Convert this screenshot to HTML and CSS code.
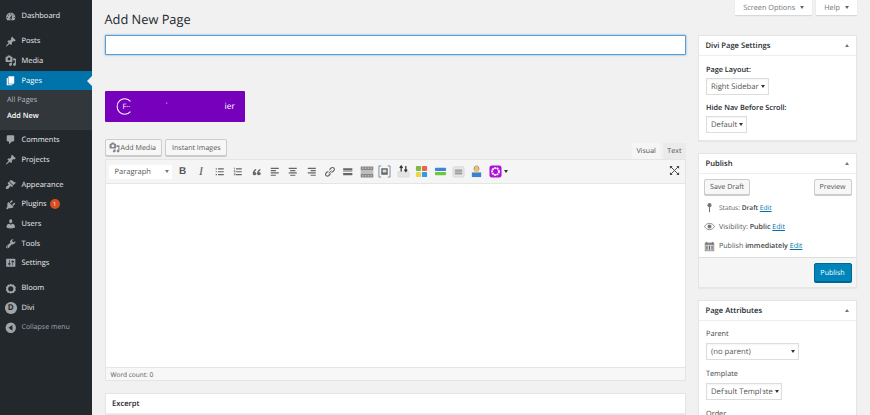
FILE: index.html
```html
<!DOCTYPE html>
<html lang="en">
<head>
<meta charset="utf-8">
<title>Add New Page</title>
<link rel="stylesheet" href="styles.css">
</head>
<body>
<svg class="defs" aria-hidden="true">
<symbol id="i-dash" viewBox="0 0 20 20"><path d="M3.76 16h12.48c1.1-1.37 1.76-3.11 1.76-5 0-4.42-3.58-8-8-8s-8 3.58-8 8c0 1.89.66 3.63 1.76 5zM10 4c.55 0 1 .45 1 1s-.45 1-1 1-1-.45-1-1 .45-1 1-1zM6 6c.55 0 1 .45 1 1s-.45 1-1 1-1-.45-1-1 .45-1 1-1zm8 0c.55 0 1 .45 1 1s-.45 1-1 1-1-.45-1-1 .45-1 1-1zm-5.37 5.55L12 7v6c0 1.1-.9 2-2 2s-2-.9-2-2c0-.57.24-1.08.63-1.45zM4 10c.55 0 1 .45 1 1s-.45 1-1 1-1-.45-1-1 .45-1 1-1zm12 0c.55 0 1 .45 1 1s-.45 1-1 1-1-.45-1-1 .45-1 1-1zm-5 3c0-.55-.45-1-1-1s-1 .45-1 1 .45 1 1 1 1-.45 1-1z"/></symbol>
<symbol id="i-pin" viewBox="0 0 20 20"><path d="M10.44 3.02l1.82-1.82 6.36 6.35-1.83 1.82c-1.05-.68-2.48-.57-3.41.36l-.75.75c-.92.93-1.04 2.35-.35 3.41l-1.83 1.82-2.41-2.41-2.8 2.79c-.42.42-3.38 2.71-3.8 2.29s1.86-3.39 2.28-3.81l2.79-2.79L4.1 9.36l1.83-1.82c1.05.69 2.48.57 3.4-.36l.75-.75c.93-.92 1.05-2.35.36-3.41z"/></symbol>
<symbol id="i-media" viewBox="0 0 20 20"><path d="M13 11V4c0-.55-.45-1-1-1h-1.67L9 1H5L3.67 3H2c-.55 0-1 .45-1 1v7c0 .55.45 1 1 1h10c.55 0 1-.45 1-1zM7 4.5c1.38 0 2.5 1.12 2.5 2.5S8.38 9.5 7 9.5 4.5 8.38 4.5 7 5.62 4.5 7 4.5zM14 6h5v10.5c0 1.38-1.12 2.5-2.5 2.5S14 17.88 14 16.5s1.12-2.5 2.5-2.5c.17 0 .34.02.5.05V9h-3V6zm-4 8.05V13h2v3.5c0 1.38-1.12 2.5-2.5 2.5S7 17.88 7 16.5 8.12 14 9.5 14c.17 0 .34.02.5.05z"/></symbol>
<symbol id="i-pages" viewBox="0 0 20 20"><path d="M6 15V2h10v13H6zm-1 1h8v2H3V5h2v11z"/></symbol>
<symbol id="i-comment" viewBox="0 0 20 20"><path d="M5 2h9c1.1 0 2 .9 2 2v7c0 1.1-.9 2-2 2h-2l-5 5v-5H5c-1.1 0-2-.9-2-2V4c0-1.1.9-2 2-2z"/></symbol>
<symbol id="i-brush" viewBox="0 0 20 20"><path d="M14.48 11.06L7.41 3.99l1.5-1.5c.5-.56 2.3-.47 3.51.32 1.21.8 1.43 1.28 2.91 2.1 1.18.64 2.45 1.26 4.45.85zm-.71.71L6.7 4.7 4.93 6.47c-.39.39-.39 1.02 0 1.41l1.06 1.06c.39.39.39 1.03 0 1.42-.6.6-1.43 1.11-2.21 1.69-.35.26-.7.53-1.01.84C1.43 13.23.78 15.7 1.9 16.8c1.11 1.11 3.58.46 4.92-.88.31-.31.58-.66.84-1.01.58-.78 1.09-1.61 1.69-2.21.39-.39 1.02-.39 1.41 0l1.06 1.06c.39.39 1.02.39 1.41 0z"/></symbol>
<symbol id="i-plug" viewBox="0 0 20 20"><path d="M13.11 4.36L9.87 7.6 8 5.73l3.24-3.24c.35-.34 1.05-.2 1.56.32.52.51.66 1.21.31 1.55zm-8 1.77l.91-1.12 9.01 9.01-1.19.84c-.71.71-2.63 1.16-3.82 1.16H6.14L4.9 17.26c-.59.59-1.54.59-2.12 0-.59-.58-.59-1.53 0-2.12l1.24-1.24v-3.88c0-1.13.4-3.19 1.09-3.89zm7.26 3.97l3.24-3.24c.34-.35 1.04-.21 1.55.31.52.51.66 1.21.31 1.55l-3.24 3.25z"/></symbol>
<symbol id="i-users" viewBox="0 0 20 20"><path d="M10 9.25c-2.27 0-2.73-3.44-2.73-3.44C7 4.02 7.82 2 9.97 2c2.16 0 2.98 2.02 2.71 3.81 0 0-.41 3.44-2.68 3.44zm0 2.57L12.72 10c2.39 0 4.52 2.33 4.52 4.53v2.49s-3.65 1.13-7.24 1.13c-3.65 0-7.24-1.13-7.24-1.13v-2.49c0-2.25 1.94-4.48 4.47-4.48z"/></symbol>
<symbol id="i-tools" viewBox="0 0 20 20"><path d="M16.68 9.77c-1.34 1.34-3.3 1.67-4.95.99l-5.41 6.52c-.99.99-2.59.99-3.58 0s-.99-2.59 0-3.57l6.52-5.42c-.68-1.65-.35-3.61.99-4.95 1.28-1.28 3.12-1.62 4.72-1.06l-2.89 2.89 2.82 2.82 2.86-2.87c.53 1.58.18 3.39-1.08 4.65zM3.81 16.21c.4.39 1.04.39 1.43 0 .4-.4.4-1.04 0-1.43-.39-.4-1.03-.4-1.43 0-.39.39-.39 1.03 0 1.43z"/></symbol>
<symbol id="i-settings" viewBox="0 0 20 20"><path d="M18 16V4c0-.55-.45-1-1-1H3c-.55 0-1 .45-1 1v12c0 .55.45 1 1 1h14c.55 0 1-.45 1-1zM8 11h1c.55 0 1 .45 1 1s-.45 1-1 1H8v1.5c0 .28-.22.5-.5.5s-.5-.22-.5-.5V13H6c-.55 0-1-.45-1-1s.45-1 1-1h1V5.5c0-.28.22-.5.5-.5s.5.22.5.5V11zm5-2h-1c-.55 0-1-.45-1-1s.45-1 1-1h1V5.5c0-.28.22-.5.5-.5s.5.22.5.5V7h1c.55 0 1 .45 1 1s-.45 1-1 1h-1v5.5c0 .28-.22.5-.5.5s-.5-.22-.5-.5V9z"/></symbol>
<symbol id="i-bloom" viewBox="0 0 20 20"><path fill-rule="evenodd" d="M10 1.5l2.4 1.6 2.9-.3 1.2 2.6 2.4 1.7-.8 2.9.8 2.9-2.4 1.7-1.2 2.6-2.9-.3-2.4 1.6-2.4-1.6-2.9.3-1.2-2.6L1.500 13l.8-2.9-.8-2.900L3.900 5.400l1.200-2.600 2.900.3zM10 5.500a4.500 4.500 0 1 0 0 9 4.500 4.500 0 0 0 0-9z"/></symbol>
<symbol id="i-collapse" viewBox="0 0 20 20"><path fill-rule="evenodd" d="M10 1a9 9 0 1 1 0 18 9 9 0 0 1 0-18zm3 4L6 10l7 5z"/></symbol>
<symbol id="i-ul" viewBox="0 0 20 20"><path d="M3 4h2v2H3zM7 4h10v2H7zM3 9h2v2H3zM7 9h10v2H7zM3 14h2v2H3zM7 14h10v2H7z"/></symbol>
<symbol id="i-ol" viewBox="0 0 20 20"><path d="M3 3h2v3H4V4H3zM3 8h3v1l-2 1h2v1H3v-1l2-1H3zM3 13h3v3H3v-1h2v-.3H4V14h1v-.3H3zM7 4h10v2H7zM7 9h10v2H7zM7 14h10v2H7z"/></symbol>
<symbol id="i-quote" viewBox="0 0 20 20"><path d="M9.490 13.220c0-1.300-.99-2.300-2.300-2.300-.4 0-.8.1-1.100.3.4-1.800 1.800-3.400 3.400-4.400L8.100 5.200C5 6.900 3 9.800 3 12.900c0 1.900 1.300 3.200 3.200 3.200 1.800 0 3.290-1.200 3.290-2.880zm7.510 0c0-1.300-1-2.300-2.300-2.300-.4 0-.8.1-1.100.3.400-1.800 1.800-3.400 3.400-4.400l-1.400-1.620c-3.100 1.700-5.100 4.600-5.100 7.700 0 1.900 1.300 3.200 3.200 3.200 1.800 0 3.300-1.200 3.300-2.880z"/></symbol>
<symbol id="i-al" viewBox="0 0 20 20"><path d="M3 3h14v2H3zM3 7h9v2H3zM3 11h14v2H3zM3 15h9v2H3z"/></symbol>
<symbol id="i-ac" viewBox="0 0 20 20"><path d="M3 3h14v2H3zM5.500 7h9v2h-9zM3 11h14v2H3zM5.500 15h9v2h-9z"/></symbol>
<symbol id="i-ar" viewBox="0 0 20 20"><path d="M3 3h14v2H3zM8 7h9v2H8zM3 11h14v2H3zM8 15h9v2H8z"/></symbol>
<symbol id="i-link" viewBox="0 0 20 20"><path d="M17.740 2.760c1.680 1.690 1.680 4.410 0 6.100l-1.530 1.520c-1.120 1.120-2.700 1.490-4.130 1.130l2.790-2.790.76-.76.76-.76c.84-.84.84-2.200 0-3.040-.84-.85-2.200-.85-3.040 0l-.77.760-3.550 3.550c-.36-1.430.01-3.010 1.130-4.130l1.520-1.530c1.690-1.680 4.410-1.680 6.100 0zM8.590 13.430l5.100-5.100-1.010-1.020-5.100 5.100zM8.100 15.230l-.76.76c-.84.85-2.200.85-3.040 0-.84-.84-.84-2.200 0-3.040l3.550-3.550.76-.76c-1.430-.36-3.010.01-4.130 1.130l-1.520 1.530c-1.680 1.690-1.680 4.410 0 6.100 1.690 1.680 4.410 1.680 6.100 0l1.520-1.530c1.130-1.120 1.490-2.700 1.130-4.130z"/></symbol>
<symbol id="i-more" viewBox="0 0 20 20"><path d="M2 4h16v4H2zM2 9.400h16v1.200H2zM2 12h16v4H2z"/></symbol>
<symbol id="i-grid" viewBox="0 0 20 20"><path d="M1 2h18v6H1zM1 9.400h18v1.200H1zM1 12h18v6H1z"/><path class="cut" d="M3 4h2v1H3zM7 4h2v1H7zM11 4h2v1h-2zM15 4h2v1h-2zM3 15h2v1H3zM7 15h2v1H7zM11 15h2v1h-2zM15 15h2v1h-2z"/></symbol>
</svg>

<nav class="side">
  <ul class="menu">
    <li class="item"><svg class="ico"><use href="#i-dash"/></svg>Dashboard</li>
    <li class="item gap"><svg class="ico"><use href="#i-pin"/></svg>Posts</li>
    <li class="item"><svg class="ico"><use href="#i-media"/></svg>Media</li>
    <li class="item on"><svg class="ico"><use href="#i-pages"/></svg>Pages</li>
    <li class="sub"><span class="sub-a">All Pages</span><span class="sub-b">Add New</span></li>
    <li class="item"><svg class="ico"><use href="#i-comment"/></svg>Comments</li>
    <li class="item"><svg class="ico"><use href="#i-pin"/></svg>Projects</li>
    <li class="item gap"><svg class="ico"><use href="#i-brush"/></svg>Appearance</li>
    <li class="item"><svg class="ico"><use href="#i-plug"/></svg>Plugins<span class="badge">1</span></li>
    <li class="item"><svg class="ico"><use href="#i-users"/></svg>Users</li>
    <li class="item"><svg class="ico"><use href="#i-tools"/></svg>Tools</li>
    <li class="item"><svg class="ico"><use href="#i-settings"/></svg>Settings</li>
    <li class="item gap"><svg class="ico"><use href="#i-bloom"/></svg>Bloom</li>
    <li class="item"><span class="divi">D</span>Divi</li>
    <li class="item dim"><svg class="ico"><use href="#i-collapse"/></svg>Collapse menu</li>
  </ul>
</nav>

<main class="wrap">
  <section class="left">
    <h1 class="title">Add New Page</h1>
    <input class="name" type="text" aria-label="Title">
    <div class="promo">
      <svg class="promo-ring" viewBox="0 0 20 20"><path d="M17 4A9 9 0 1 0 17 16" fill="none" stroke="#fff" stroke-width="1.200"/></svg>
      <span class="promo-a">F··</span><span class="promo-c">·</span><span class="promo-b">ier</span>
    </div>
    <div class="media-row">
      <span class="btn"><svg class="btn-ico"><use href="#i-media"/></svg>Add Media</span>
      <span class="btn">Instant Images</span>
      <span class="tabs"><span class="tab act">Visual</span><span class="tab">Text</span></span>
    </div>
    <div class="editor">
      <div class="bar">
        <span class="para">Paragraph<i class="caret"></i></span>
        <span class="tools">
          <b class="t t-b">B</b>
          <i class="t t-i">I</i>
          <span class="t"><svg class="ti"><use href="#i-ul"/></svg></span>
          <span class="t"><svg class="ti"><use href="#i-ol"/></svg></span>
          <span class="t"><svg class="ti"><use href="#i-quote"/></svg></span>
          <span class="t"><svg class="ti"><use href="#i-al"/></svg></span>
          <span class="t"><svg class="ti"><use href="#i-ac"/></svg></span>
          <span class="t"><svg class="ti"><use href="#i-ar"/></svg></span>
          <span class="t"><svg class="ti"><use href="#i-link"/></svg></span>
          <span class="t"><svg class="ti"><use href="#i-more"/></svg></span>
          <span class="t"><svg class="ti ti-grid"><use href="#i-grid"/></svg></span>
          <span class="t"><svg class="tw" viewBox="0 0 14 14"><path d="M3.500 1H1v12h2.500M10.500 1H13v12h-2.500" fill="none" stroke="#6f8aa8" stroke-width="1"/><rect x="3.500" y="3.500" width="7" height="7" fill="#666"/><rect x="5" y="5" width="4" height="3" fill="#ddd"/></svg></span>
          <span class="t"><svg class="tw" viewBox="0 0 14 14"><rect x="1" y="7" width="12" height="6" rx="1" fill="#e4e4e4" stroke="#ccc" stroke-width=".5"/><path d="M4.500 1v6M3 3l1.500-2L6 3M9.500 7V1M8 5l1.500 2L11 5" fill="none" stroke="#333" stroke-width="1.300"/></svg></span>
          <span class="t"><svg class="tw" viewBox="0 0 14 14"><rect x="1" y="1" width="5.500" height="5.500" rx="1" fill="#7cb84a"/><rect x="7.500" y="1" width="5.500" height="5.500" rx="1" fill="#f0643c"/><rect x="1" y="7.500" width="5.500" height="5.500" rx="1" fill="#e6d84a"/><rect x="7.500" y="7.500" width="5.500" height="5.500" rx="1" fill="#2f9be8"/></svg></span>
          <span class="t"><svg class="tw" viewBox="0 0 14 14"><rect x="1" y="3" width="12" height="3.500" rx="1" fill="#3f86d8"/><rect x="1" y="7.500" width="12" height="3.500" rx="1" fill="#6cc93c"/></svg></span>
          <span class="t"><svg class="tw" viewBox="0 0 14 14"><rect x="1" y="2" width="12" height="11" rx="1.500" fill="#e8e8e8" stroke="#c8c8c8" stroke-width=".6"/><path d="M3 5.500h8M3 7.500h8M3 9.500h8" stroke="#666" stroke-width=".9"/></svg></span>
          <span class="t"><svg class="tw" viewBox="0 0 14 14"><rect x="2" y="8" width="10" height="5" fill="#3f7fd0"/><circle cx="7" cy="5" r="3" fill="#e9c27a"/><path d="M4.500 5V3.500a2.500 2.500 0 0 1 5 0V5" fill="none" stroke="#aa9060"/></svg></span>
          <span class="t"><svg class="tw" viewBox="0 0 14 14"><rect x=".5" y=".5" width="13" height="13" rx="2.500" fill="#b012d8"/><circle cx="7" cy="7" r="3.700" fill="none" stroke="#fff" stroke-width="2" stroke-dasharray="2 .6"/></svg></span>
          <i class="caret dark"></i>
        </span>
        <svg class="full" viewBox="0 0 12 12"><path d="M1 1h3L1 4zM11 1H8l3 3zM1 11h3l-3-3zM11 11H8l3-3z" fill="#444"/><path d="M2 2l8 8M10 2l-8 8" stroke="#444" stroke-width="1"/></svg>
      </div>
      <div class="area"></div>
      <div class="count">Word count: 0</div>
    </div>
    <div class="box excerpt"><h2 class="box-h">Excerpt</h2></div>
  </section>

  <aside class="right">
    <div class="meta">
      <span class="meta-tab">Screen Options<i class="caret"></i></span>
      <span class="meta-tab">Help<i class="caret"></i></span>
    </div>

    <div class="box">
      <h2 class="box-h">Divi Page Settings<i class="up"></i></h2>
      <div class="box-b divi-b">
        <p class="lab strong">Page Layout:</p>
        <span class="sel s-layout">Right Sidebar<i class="caret dark"></i></span>
        <p class="lab strong l2">Hide Nav Before Scroll:</p>
        <span class="sel s-default">Default<i class="caret dark"></i></span>
      </div>
    </div>

    <div class="box">
      <h2 class="box-h">Publish<i class="up"></i></h2>
      <div class="pub-top">
        <span class="btn">Save Draft</span>
        <span class="btn">Preview</span>
      </div>
      <div class="pub-row r-status"><svg class="pi" viewBox="0 0 14 14"><circle cx="7" cy="4" r="2.600" fill="#777"/><path d="M6.300 5h1.400v8H6.300z" fill="#777"/></svg><span class="small">Status: <b>Draft</b> <a class="lnk">Edit</a></span></div>
      <div class="pub-row"><svg class="pi" viewBox="0 0 14 14"><path d="M.5 7C2 4.500 4.500 3 7 3s5 1.500 6.500 4C12 9.500 9.500 11 7 11S2 9.500.5 7z" fill="none" stroke="#777"/><circle cx="7" cy="7" r="2.500" fill="#777"/></svg><span>Visibility: <b>Public</b> <a class="lnk">Edit</a></span></div>
      <div class="pub-row"><svg class="pi" viewBox="0 0 14 14"><path d="M1 2h12v11H1z" fill="#888"/><path d="M2 5h10v7H2z" fill="#ddd"/><path d="M3 1h1v3H3zM10 1h1v3h-1zM3 6h1.500v5H3zM6.200 6h1.500v5H6.200zM9.500 6H11v5H9.500z" fill="#666"/></svg><span>Publish <b>immediately</b> <a class="lnk">Edit</a></span></div>
      <div class="pub-foot"><span class="btn primary">Publish</span></div>
    </div>

    <div class="box">
      <h2 class="box-h">Page Attributes<i class="up"></i></h2>
      <div class="box-b attr-b">
        <p class="lab mid">Parent</p>
        <span class="sel s-parent">(no parent)<i class="caret dark"></i></span>
        <p class="lab mid l3">Template</p>
        <span class="sel s-tpl"><span class="struck">Default Template</span><i class="caret dark"></i></span>
        <p class="lab mid l3">Order</p>
      </div>
    </div>
  </aside>
</main>
</body>
</html>
```

FILE: styles.css
```css
* { box-sizing: border-box; }
html, body { margin: 0; height: 415px; overflow: hidden; }
body {
  display: flex;
  background: #f1f1f1;
  font-family: "Open Sans", "Liberation Sans", sans-serif;
  font-size: 8px;
  color: #444;
  text-rendering: geometricPrecision;
}
.defs { display: none; }

/* sidebar */
.side { width: 92px; height: 415px; background: #23282d; flex: none; }
.menu { list-style: none; margin: 0; padding: 6.500px 0 0; }
.item {
  display: flex;
  align-items: center;
  height: 19.6px;
  padding-left: 5px;
  color: #eee;
  font-size: 7.500px;
}
.item.gap { margin-top: 5.500px; }
.item.on { background: #0073aa; color: #fff; position: relative; }
.item.on::after {
  content: "";
  position: absolute;
  right: 0;
  top: 5px;
  border: 5px solid transparent;
  border-left-width: 0;
  border-right-color: #f1f1f1;
}
.item.on .ico { fill: #fff; }
.item.dim { color: #a0a5aa; font-size: 7px; }
.ico { width: 11.500px; height: 11.500px; fill: #a0a5aa; margin-right: 5px; flex: none; }
.divi {
  width: 11.500px; height: 11.500px; margin-right: 5px; border-radius: 50%;
  background: #a0a5aa; color: #23282d; font-size: 8px; font-weight: 700;
  display: flex; align-items: center; justify-content: center; flex: none;
}
.badge {
  width: 10px; height: 10px; border-radius: 50%; margin-left: 3px;
  background: #d54e21; color: #fff; font-size: 5.500px;
  display: flex; align-items: center; justify-content: center;
}
.sub {
  background: #32373c; height: 40px; padding: 4px 0 0 7px;
  display: flex; flex-direction: column; gap: 4px; font-size: 7.300px;
}
.sub-a { color: #b4b9be; height: 12px; line-height: 12px; }
.sub-b { color: #fff; font-weight: 600; height: 12px; line-height: 12px; }

/* layout */
.wrap { flex: 1; display: flex; padding-left: 12.500px; min-width: 0; }
.left { width: 581.500px; flex: none; padding-top: 10px; }
.right { width: 159px; flex: none; margin-left: 12px; }

.title { margin: 0; font-size: 12.800px; font-weight: 400; line-height: 19px; color: #23282d; }
.name {
  display: block; width: 100%; height: 20px; margin: 6px 0 0;
  background: #fff; border: 1px solid #5b9dd9; border-radius: 1px;
  box-shadow: 0 0 2px rgba(30,140,190,.8);
}
.promo {
  margin-top: 36px; height: 31px; width: 140px;
  background: #7600bc; border-radius: 1px; color: #fff;
  display: flex; align-items: center; font-size: 8.500px;
  padding-left: 11px;
}
.promo-ring { width: 17px; height: 17px; flex: none; }
.promo-a { margin-left: -10px; width: 43px; font-size: 7.500px; }
.promo-c { width: 59px; margin-top: -6px; }

.media-row { display: flex; align-items: flex-start; gap: 3px; margin-top: 17px; height: 20px; }
.btn {
  display: inline-flex; align-items: center; height: 17px; padding: 0 5.500px;
  background: #f7f7f7; border: 1px solid #ccc; border-radius: 2px;
  box-shadow: 0 1px 0 #ccc; color: #555; font-size: 7.100px; white-space: nowrap;
}
.btn-ico { width: 11px; height: 11px; fill: #82878c; margin-right: 1px; margin-left: -2.500px; }
.tabs { margin-left: auto; display: flex; gap: 2.500px; padding-top: 4px; }
.tab {
  height: 16px; padding: 0 4.500px; display: flex; align-items: center;
  background: #ebebeb; color: #555; font-size: 7.100px;
}
.tab.act { background: #f5f5f5; }

.editor { border: 1px solid #e5e5e5; background: #fff; }
.bar {
  height: 24px; background: #f5f5f5; border-bottom: 1px solid #e5e5e5;
  display: flex; align-items: center; padding-left: 3px; position: relative;
}
.para {
  width: 63px; height: 14px; background: #fff; color: #555; font-size: 7.500px;
  display: flex; align-items: center; justify-content: space-between; padding: 0 3px 0 6px;
}
.caret {
  display: inline-block; width: 0; height: 0; margin-left: 5px;
  border: 2.500px solid transparent; border-top: 3px solid #72777c; border-bottom-width: 0;
}
.caret.dark { border-top-color: #333; }
.tools { display: flex; align-items: center; margin-left: 2px; }
.t {
  width: 18.400px; height: 14px; display: flex; align-items: center; justify-content: center;
  color: #555; font-family: "Liberation Serif", serif; font-size: 12px;
}
.t-b { font-family: "Liberation Sans", sans-serif; font-size: 10px; }
.ti { width: 11.500px; height: 11.500px; fill: #666; }
.ti-grid { width: 14px; height: 14px; fill: #888; }
.cut { fill: #e8e8e8; }
.tools .caret { margin-left: -1px; }
.tw { width: 13px; height: 13px; }
.full { position: absolute; right: 5px; top: 5px; width: 11px; height: 11px; }
.area { height: 183px; background: #fff; }
.count {
  height: 13px; background: #f7f7f7; border-top: 1px solid #e5e5e5;
  font-size: 6.500px; color: #555; padding-left: 5px; display: flex; align-items: center;
}

/* boxes */
.box { background: #fff; border: 1px solid #e5e5e5; box-shadow: 0 1px 1px rgba(0,0,0,.04); margin-bottom: 12px; }
.excerpt { margin-top: 12px; }
.box-h {
  margin: 0; height: 20px; padding: 0 6.500px; border-bottom: 1px solid #eee;
  font-size: 7.600px; font-weight: 600; color: #23282d;
  display: flex; align-items: center; justify-content: space-between;
}
.up {
  width: 0; height: 0; margin-right: 1px;
  border: 2.500px solid transparent; border-bottom: 3px solid #72777c; border-top-width: 0;
}
.meta { display: flex; justify-content: flex-end; gap: 4px; height: 35px; }
.meta-tab {
  height: 15px; background: #fff; color: #72777c; font-size: 7.300px;
  padding: 0 8px; display: flex; align-items: center;
  box-shadow: 0 1px 1px rgba(0,0,0,.1);
}
.meta-tab .caret { border-top-color: #666; }
.box-b { padding: 0 7px; }
.divi-b { padding-top: 9px; height: 84px; }
.divi-b .lab { margin-bottom: 2px; }
.attr-b { padding-top: 8px; }
.lab { margin: 0 0 3px; line-height: 11px; font-size: 7.300px; color: #23282d; }
.strong { font-weight: 600; }
.mid { color: #444; }
.l2 { margin-top: 8px; }
.l3 { margin-top: 9px; }
.sel {
  display: inline-flex; align-items: center; justify-content: space-between; height: 17px;
  background: #fff; border: 1px solid #ddd; box-shadow: inset 0 1px 2px rgba(0,0,0,.05);
  color: #555; font-size: 7.700px; padding: 0 3px 0 4px; white-space: nowrap;
}
.sel .caret { margin-left: 2px; }
.s-layout { width: 63px; }
.s-default { width: 41px; }
.s-parent { width: 93px; }
.s-tpl { width: 76px; }
.struck { position: relative; }
.struck::after {
  content: ""; position: absolute; left: 0; right: 0; top: 5px; height: 6px;
  background: repeating-linear-gradient(90deg, transparent 0 12px, #fff 12px 14px, transparent 14px 19px);
}
.pub-top { display: flex; justify-content: space-between; padding: 5px 4.500px 0 5px; height: 24px; }
.pub-top .btn { height: 16px; font-size: 7.100px; padding: 0 5px; }
.pub-row { display: flex; align-items: center; height: 19.500px; padding-left: 5px; font-size: 7.100px; color: #555; }
.r-status { height: 19px; }
.small { font-size: 6.600px; }
.pi { width: 11px; height: 11px; margin-right: 4px; flex: none; }
.pub-row b { font-weight: 600; color: #444; }
.lnk { color: #0073aa; text-decoration: underline; }
.pub-foot {
  margin-top: 1px; height: 30px; background: #f5f5f5; border-top: 1px solid #ddd;
  display: flex; justify-content: flex-end; align-items: center; padding-right: 4.500px;
}
.btn.primary {
  height: 19px; width: 38px; justify-content: center; padding: 0;
  background: #0085ba; border-color: #006799; color: #fff; box-shadow: 0 1px 0 #006799;
}
```
